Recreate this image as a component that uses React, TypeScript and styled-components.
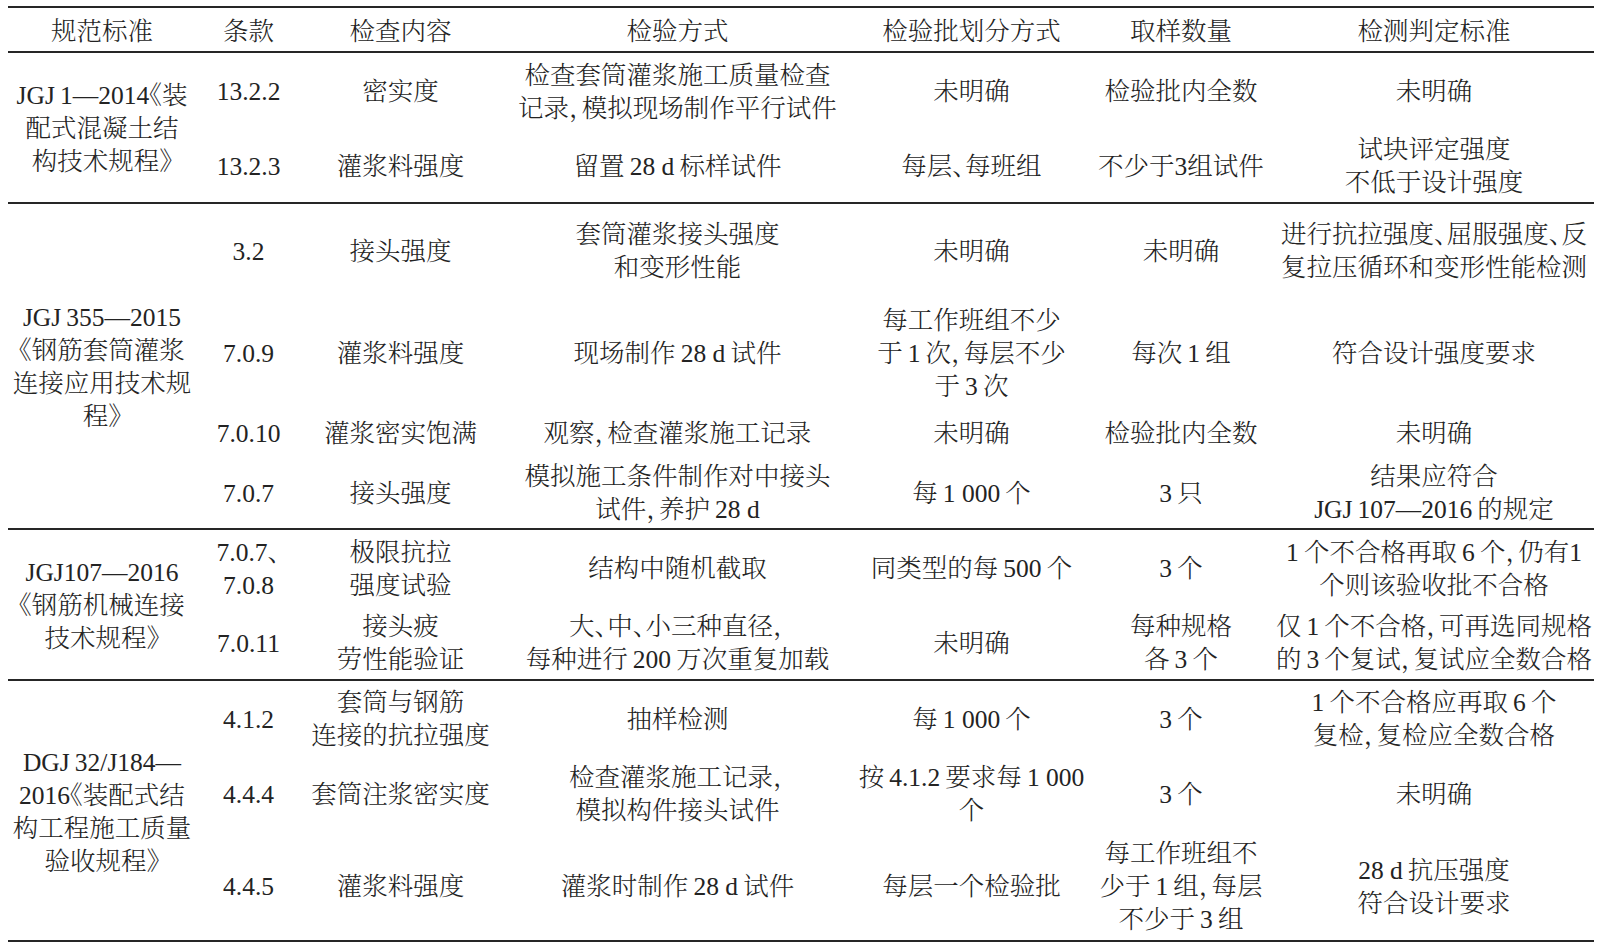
import React from 'react'
import styled, { createGlobalStyle } from 'styled-components'

const GlobalStyle = createGlobalStyle`
  html, body {
    margin: 0;
    padding: 0;
    background: #ffffff;
  }
  body {
    font-family: "Liberation Serif", "Noto Serif CJK SC", "Noto Sans CJK SC", serif;
    color: #232323;
  }
`

const Page = styled.div`
  padding: 6px 0 0 8px;
`

const Table = styled.table`
  width: 1586px;
  table-layout: fixed;
  border-collapse: collapse;
  border-top: 2px solid #262626;
  font-size: 25.5px;
  font-weight: 300;
  font-feature-settings: 'halt';
  line-height: 33px;
`

const Col = styled.col<{ $w: number }>`
  width: ${(p) => p.$w}px;
`

const Head = styled.thead`
  border-bottom: 2px solid #262626;
`

const Group = styled.tbody`
  border-bottom: 2px solid #262626;
`

const Row = styled.tr<{ $h: number }>`
  height: ${(p) => p.$h}px;
`

const HeadCell = styled.th`
  font-weight: 300;
  text-align: center;
  vertical-align: middle;
  padding: 3px 0 0;
  white-space: nowrap;
`

const Cell = styled.td`
  text-align: center;
  vertical-align: middle;
  padding: 2px 0 0;
  white-space: nowrap;
`

const widths = [188, 105, 199, 355, 233, 186, 320]

const headers = ['规范标准', '条款', '检查内容', '检验方式', '检验批划分方式', '取样数量', '检测判定标准']

interface GroupData {
  standard: string
  rows: { h: number; cells: string[] }[]
}

// thin space used around numbers, as in the typeset original
const t = '\u2009'

const groups: GroupData[] = [
  {
    standard: `JGJ${t}1—2014《装\n配式混凝土结\n构技术规程》`,
    rows: [
      {
        h: 76,
        cells: ['13.2.2', '密实度', '检查套筒灌浆施工质量检查\n记录，模拟现场制作平行试件', '未明确', '检验批内全数', '未明确'],
      },
      {
        h: 75,
        cells: ['13.2.3', '灌浆料强度', `留置${t}28 d${t}标样试件`, '每层、每班组', '不少于3组试件', '试块评定强度\n不低于设计强度'],
      },
    ],
  },
  {
    standard: `JGJ${t}355—2015\n《钢筋套筒灌浆\n连接应用技术规\n程》`,
    rows: [
      {
        h: 93,
        cells: [
          '3.2',
          '接头强度',
          '套筒灌浆接头强度\n和变形性能',
          '未明确',
          '未明确',
          '进行抗拉强度、屈服强度、反\n复拉压循环和变形性能检测',
        ],
      },
      {
        h: 112,
        cells: [
          '7.0.9',
          '灌浆料强度',
          `现场制作${t}28 d${t}试件`,
          `每工作班组不少\n于${t}1${t}次，每层不少\n于${t}3${t}次`,
          `每次${t}1${t}组`,
          '符合设计强度要求',
        ],
      },
      {
        h: 48,
        cells: ['7.0.10', '灌浆密实饱满', '观察，检查灌浆施工记录', '未明确', '检验批内全数', '未明确'],
      },
      {
        h: 73,
        cells: [
          '7.0.7',
          '接头强度',
          `模拟施工条件制作对中接头\n试件，养护${t}28 d`,
          `每${t}1 000${t}个`,
          `3${t}只`,
          `结果应符合\nJGJ${t}107—2016${t}的规定`,
        ],
      },
    ],
  },
  {
    standard: 'JGJ107—2016\n《钢筋机械连接\n技术规程》',
    rows: [
      {
        h: 76,
        cells: [
          '7.0.7、\n7.0.8',
          '极限抗拉\n强度试验',
          '结构中随机截取',
          `同类型的每${t}500${t}个`,
          `3${t}个`,
          `1${t}个不合格再取${t}6${t}个，仍有1\n个则该验收批不合格`,
        ],
      },
      {
        h: 75,
        cells: [
          '7.0.11',
          '接头疲\n劳性能验证',
          `大、中、小三种直径，\n每种进行${t}200${t}万次重复加载`,
          '未明确',
          `每种规格\n各${t}3${t}个`,
          `仅${t}1${t}个不合格，可再选同规格\n的${t}3${t}个复试，复试应全数合格`,
        ],
      },
    ],
  },
  {
    standard: `DGJ${t}32/J184—\n2016《装配式结\n构工程施工质量\n验收规程》`,
    rows: [
      {
        h: 75,
        cells: [
          '4.1.2',
          '套筒与钢筋\n连接的抗拉强度',
          '抽样检测',
          `每${t}1 000${t}个`,
          `3${t}个`,
          `1${t}个不合格应再取${t}6${t}个\n复检，复检应全数合格`,
        ],
      },
      {
        h: 76,
        cells: [
          '4.4.4',
          '套筒注浆密实度',
          '检查灌浆施工记录，\n模拟构件接头试件',
          `按${t}4.1.2${t}要求每${t}1 000\n个`,
          `3${t}个`,
          '未明确',
        ],
      },
      {
        h: 110,
        cells: [
          '4.4.5',
          '灌浆料强度',
          `灌浆时制作${t}28 d${t}试件`,
          '每层一个检验批',
          `每工作班组不\n少于${t}1${t}组，每层\n不少于${t}3${t}组`,
          `28 d${t}抗压强度\n符合设计要求`,
        ],
      },
    ],
  },
]

const Lines = ({ text }: { text: string }) => (
  <>
    {text.split('\n').map((line, i) => (
      <React.Fragment key={i}>
        {i > 0 && <br />}
        {line}
      </React.Fragment>
    ))}
  </>
)

const App = (): React.ReactElement => {
  return (
    <Page>
      <GlobalStyle />
      <Table>
        <colgroup>
          {widths.map((w, i) => (
            <Col key={i} $w={w} />
          ))}
        </colgroup>
        <Head>
          <Row $h={45}>
            {headers.map((h) => (
              <HeadCell key={h}>{h}</HeadCell>
            ))}
          </Row>
        </Head>
        {groups.map((group, gi) => (
          <Group key={gi}>
            {group.rows.map((row, ri) => (
              <Row key={ri} $h={row.h}>
                {ri === 0 && (
                  <Cell rowSpan={group.rows.length}>
                    <Lines text={group.standard} />
                  </Cell>
                )}
                {row.cells.map((c, ci) => (
                  <Cell key={ci}>
                    <Lines text={c} />
                  </Cell>
                ))}
              </Row>
            ))}
          </Group>
        ))}
      </Table>
    </Page>
  )
}

export default App
